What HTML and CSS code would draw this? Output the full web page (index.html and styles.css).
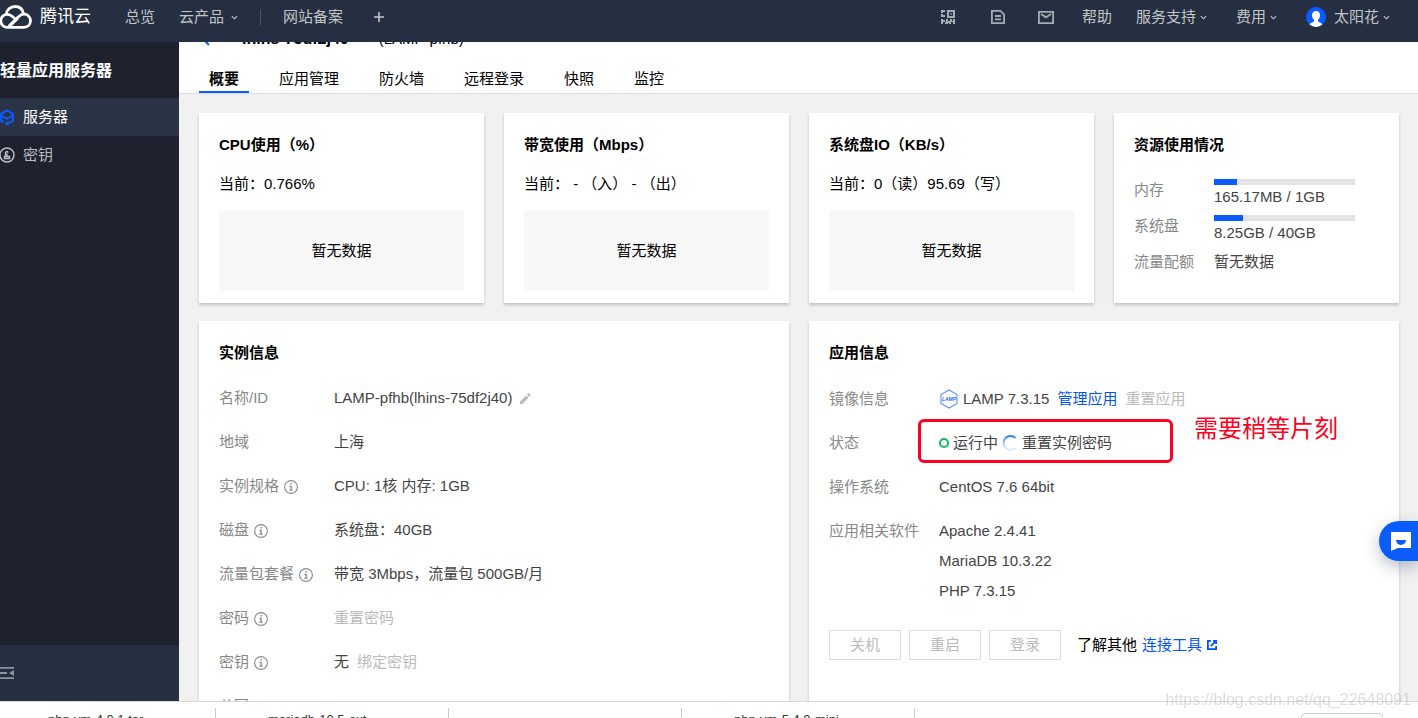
FILE: index.html
```html
<!DOCTYPE html>
<html lang="zh-CN">
<head>
<meta charset="utf-8">
<title>轻量应用服务器</title>
<link rel="stylesheet" href="styles.css">
</head>
<body>
<svg class="sprite" aria-hidden="true">
  <symbol id="chev" viewBox="0 0 8 8"><path d="M1 2.5 4 5.5 7 2.5" fill="none" stroke="currentColor" stroke-width="1.3"/></symbol>
  <symbol id="info" viewBox="0 0 14 14"><circle cx="7" cy="7" r="6.4" fill="none" stroke="currentColor" stroke-width="1.1"/><path d="M6.3 3h1.5v1.5H6.3zM5.2 5.8h2.6v4h1v1H5.2v-1h1.2v-3H5.2z" fill="currentColor"/></symbol>
</svg>

<header class="topbar">
  <a class="brand" href="#">
    <svg class="logo" viewBox="0 0 32 24" fill="none" stroke="#fff" stroke-width="2.8"><path d="M6.5 9.2C6.4 4.9 10.300 1.500 15 1.500c4.300 0 7.600 2.600 8.400 6.700"/><path d="M17.800 13.200 8.400 22.300H6.800C3.200 22.300.8 19.400.8 15.800.8 12.200 3.600 9.400 7.200 9.400c2.300 0 4 .9 5.800 2.600l2 1.800"/><path d="M9.200 22.300h15c3.700 0 6.300-2.900 6.300-6.500 0-3.700-2.800-6.600-6.500-6.600-2.200 0-3.900.9-5.700 2.700l-9.100 8.900"/></svg>
    <span>腾讯云</span>
  </a>
  <nav class="nav-left">
    <a href="#">总览</a>
    <a href="#" class="products">云产品<svg class="chev"><use href="#chev"/></svg></a>
    <span class="divider"></span>
    <a href="#">网站备案</a>
    <button class="plus" aria-label="添加"><svg viewBox="0 0 10 10"><path d="M5 0v10M0 5h10" stroke="currentColor" stroke-width="1.6"/></svg></button>
  </nav>
  <nav class="nav-right">
    <button class="tool" aria-label="二维码"><svg viewBox="0 0 14 14" fill="currentColor"><path d="M0 0h4v2H2v1H0zM0 4h2v1h2v2H0zM6 0h8v8H6zM8 2v4h4V2zM9.300 3.300h1.400v1.400H9.300zM0 9h2v1h2v2H2v2H0zM5 9h2v2h2V9h2v2h1V9h2v5h-2v-2h-2v2H8v-1H7v1H4v-2h1z" fill-rule="evenodd"/></svg></button>
    <button class="tool" aria-label="文档"><svg viewBox="0 0 14 14" fill="none" stroke="currentColor" stroke-width="1.800"><path d="M.9.9h8.600l3.600 3.600v8.600H.9zM4 6h6M4 9.300h6"/></svg></button>
    <button class="tool mail" aria-label="消息"><svg viewBox="0 0 16 13" fill="none" stroke="currentColor" stroke-width="1.800"><path d="M.9.9h14.200v11.200H.9zM3 3l5 3.300L13 3"/></svg></button>
    <a href="#" class="help">帮助</a>
    <a href="#">服务支持<svg class="chev"><use href="#chev"/></svg></a>
    <a href="#">费用<svg class="chev"><use href="#chev"/></svg></a>
    <a href="#" class="user"><svg class="avatar" viewBox="0 0 20 20"><circle cx="10" cy="10" r="10" fill="#0a5cff"/><path d="M10 4c2.500 0 4 1.700 4 4.200 0 1.900-.9 3.700-2 4.600v1.500c0 .8 3.400 1.300 4.400 3.300A10 10 0 0 1 10 20a10 10 0 0 1-6.400-2.400c1-2 4.400-2.500 4.400-3.300v-1.500c-1.100-.9-2-2.700-2-4.600C6 5.700 7.500 4 10 4z" fill="#fff"/></svg>太阳花<svg class="chev"><use href="#chev"/></svg></a>
  </nav>
</header>

<div class="body">
  <aside class="sidebar">
    <h2>轻量应用服务器</h2>
    <nav class="menu">
      <a href="#" class="active"><svg viewBox="0 0 15 16" fill="none" stroke="#0a5cff" stroke-width="2"><path d="M3.500 13.200 1 11.800V4.800L7 1.300l6 3.500v7l-6 3M1.500 7 7 9.800 12.500 6.500"/><circle cx="7" cy="14.500" r=".8" fill="#0a5cff"/></svg>服务器</a>
      <a href="#"><svg viewBox="0 0 15 16" fill="none" stroke="currentColor" stroke-width="1.500"><circle cx="7" cy="8" r="7"/><path d="M4.500 9.500h5v2h-5zM5.500 9V5.500L7 4.500l1.300 1"/><path d="M7 6.500v3"/></svg>密钥</a>
    </nav>
    <button class="collapse" aria-label="收起"><svg viewBox="0 0 14 12" fill="currentColor"><path d="M0 0h14v1.800H0zM0 5h7v2H0zM0 10.200h14V12H0zM14 3v6L9 6z"/></svg></button>
  </aside>

  <main class="content">
    <div class="page-head">
      <div class="title-row">
        <a href="#" class="back" aria-label="返回"><svg viewBox="0 0 10 14"><path d="M8 1 2 7l6 6" fill="none" stroke="#0a5cff" stroke-width="2"/></svg></a>
        <h1>lhins-75df2j40</h1><span>(LAMP-pfhb)</span>
      </div>
      <nav class="tabs">
        <a href="#" class="active">概要</a><a href="#">应用管理</a><a href="#">防火墙</a><a href="#">远程登录</a><a href="#">快照</a><a href="#">监控</a>
      </nav>
    </div>

    <div class="panels">
      <section class="metrics">
        <article class="card"><h3>CPU使用（%）</h3><p>当前：0.766%</p><div class="empty">暂无数据</div></article>
        <article class="card"><h3>带宽使用（Mbps）</h3><p>当前： - （入） - （出）</p><div class="empty">暂无数据</div></article>
        <article class="card"><h3>系统盘IO（KB/s）</h3><p>当前：0（读）95.69（写）</p><div class="empty">暂无数据</div></article>
        <article class="card">
          <h3>资源使用情况</h3>
          <dl class="usage">
            <dt>内存</dt><dd><div class="bar"><div class="fill" style="width:16.500%"></div></div><span>165.17MB / 1GB</span></dd>
            <dt>系统盘</dt><dd><div class="bar"><div class="fill" style="width:20.600%"></div></div><span>8.25GB / 40GB</span></dd>
            <dt>流量配额</dt><dd>暂无数据</dd>
          </dl>
        </article>
      </section>

      <section class="details">
        <article class="card">
          <h3>实例信息</h3>
          <dl class="info">
            <dt>名称/ID</dt><dd>LAMP-pfhb(lhins-75df2j40)<button class="edit" aria-label="编辑"><svg viewBox="0 0 12 12" fill="#bbb"><path d="M0 12V9.300l6.700-6.700 2.700 2.700L2.700 12zM7.600 1.700 9.300 0 12 2.700l-1.700 1.700z"/></svg></button></dd>
            <dt>地域</dt><dd>上海</dd>
            <dt>实例规格<svg class="tip"><use href="#info"/></svg></dt><dd>CPU: 1核 内存: 1GB</dd>
            <dt>磁盘<svg class="tip"><use href="#info"/></svg></dt><dd>系统盘：40GB</dd>
            <dt>流量包套餐<svg class="tip"><use href="#info"/></svg></dt><dd>带宽 3Mbps，流量包 500GB/月</dd>
            <dt>密码<svg class="tip"><use href="#info"/></svg></dt><dd><button class="link off" disabled>重置密码</button></dd>
            <dt>密钥<svg class="tip"><use href="#info"/></svg></dt><dd>无<button class="link off after" disabled>绑定密钥</button></dd>
            <dt>公网IP</dt><dd></dd>
          </dl>
        </article>

        <article class="card">
          <h3>应用信息</h3>
          <dl class="info app">
            <dt>镜像信息</dt>
            <dd><svg class="lamp" viewBox="0 0 20 20"><path d="M10 1l8 4.500v9L10 19l-8-4.500v-9z" fill="#fff" stroke="#5b93f5" stroke-width="1.100"/><text x="10" y="12" text-anchor="middle">LAMP</text></svg>LAMP 7.3.15<a href="#" class="after">管理应用</a><button class="link off after" disabled>重置应用</button></dd>
            <dt>状态</dt>
            <dd class="status"><span class="dot"></span>运行中<svg class="spinner" viewBox="0 0 16 16" fill="none" stroke-width="2"><defs><linearGradient id="sp" x1="0" y1="0" x2="0" y2="1"><stop offset="0" stop-color="#2f7df6"/><stop offset=".5" stop-color="#a9cbfb"/><stop offset="1" stop-color="#e4efff"/></linearGradient></defs><path d="M13.500 3A7 7 0 1 0 13.500 13" stroke="url(#sp)"/></svg>重置实例密码
              <span class="mark-box"></span><span class="mark-text">需要稍等片刻</span></dd>
            <dt>操作系统</dt><dd>CentOS 7.6 64bit</dd>
            <dt>应用相关软件</dt>
            <dd class="stack"><span>Apache 2.4.41</span><span>MariaDB 10.3.22</span><span>PHP 7.3.15</span></dd>
          </dl>
          <div class="actions">
            <button disabled>关机</button><button disabled>重启</button><button disabled>登录</button>
            <p>了解其他 <a href="#">连接工具<svg class="ext" viewBox="0 0 10 10" fill="none" stroke="currentColor" stroke-width="1.800"><path d="M4 .9H.9v8.200h8.200V6M3.800 6.200 8.800 1.200"/><path d="M6 .9h3.100V4"/></svg></a></p>
          </div>
        </article>
      </section>
    </div>
  </main>
</div>

<footer class="downloads">
  <div class="file">php-vm-4.0.1.tar</div>
  <div class="file">mariadb-10.5-ext</div>
  <div class="file"></div>
  <div class="file">php-vm-5.4.0-mini</div>
  <button class="show-all" aria-label="全部显示"></button>
</footer>

<button class="chat" aria-label="在线客服"><svg viewBox="0 0 20 19"><path d="M0 0h20v16H7l-7 3z" fill="#fff"/><path d="M5 8h10a5 5 0 0 1-10 0z" fill="#0a5cff"/></svg></button>
<span class="watermark">https://blog.csdn.net/qq_22648091</span>
</body>
</html>
```

FILE: styles.css
```css
* { box-sizing: border-box; }
body, h1, h2, h3, p, dl, dd { margin: 0; }
body {
  height: 100vh;
  overflow: hidden;
  display: flex;
  flex-direction: column;
  font: 15px/22px "Liberation Sans", "Noto Sans CJK SC", sans-serif;
  color: #000;
  background: #fff;
}
a { color: #0052ff; text-decoration: none; }
button { font: inherit; color: inherit; background: none; border: 0; padding: 0; }
svg { display: block; flex: none; }
.sprite { position: absolute; width: 0; height: 0; }

.topbar {
  height: 42px;
  padding: 0 28px 8px 0;
  display: flex;
  align-items: center;
  flex: none;
  background: #262e41;
  color: #c1c6c8;
}
.topbar a { display: flex; align-items: center; color: inherit; }
.topbar .brand { gap: 8px; font-size: 17px; color: #fff; }
.logo { width: 32px; height: 24px; }
.chev { width: 7px; height: 7px; margin-left: 4px; }
.nav-left { display: flex; align-items: center; gap: 24px; margin-left: 34px; }
.products .chev { margin-left: 7px; }
.divider { width: 1px; height: 16px; margin: 0 -2px; background: #4b5366; }
.plus { margin-left: 7px; }
.plus svg { width: 10px; height: 10px; }
.nav-right { display: flex; align-items: center; gap: 29px; margin-left: auto; }
.tool { margin-right: 7px; color: #a3adb3; }
.tool svg { width: 14px; height: 14px; }
.tool.mail { margin: 0 -1px 0 -3px; }
.tool.mail svg { width: 16px; height: 13px; }
.help { margin-right: -5px; }
.avatar { width: 20px; height: 20px; margin-right: 8px; }

.body { flex: 1; min-height: 0; display: flex; }
.sidebar {
  width: 179px;
  flex: none;
  display: flex;
  flex-direction: column;
  background: #1e222e;
  color: #b9bcc1;
}
.sidebar h2 { padding: 18px 0 16px; font-size: 16px; line-height: 22px; color: #fff; }
.menu { display: flex; flex-direction: column; }
.menu a { display: flex; align-items: center; gap: 8px; height: 38px; color: inherit; }
.menu svg { width: 15px; height: 16px; }
.menu .active { background: #2b3447; color: #fff; }
.collapse { margin-top: auto; height: 56px; background: #262e41; color: #8b959d; }
.collapse svg { width: 14px; height: 12px; }

.content { flex: 1; min-width: 0; overflow: hidden; background: #f1f1f1; }
.page-head { background: #fff; border-bottom: 1px solid #ddd; padding: 0 20px; }
.title-row { display: flex; align-items: center; height: 30px; margin-top: -18px; }
.back { padding-left: 2px; width: 43px; }
.back svg { width: 10px; height: 14px; }
h1 { font-size: 16px; line-height: 22px; margin-right: 30px; }
.tabs { display: flex; gap: 20px; margin-top: 7px; }
.tabs a { padding: 7px 10px 1px; color: #000; border-bottom: 2px solid transparent; }
.tabs .active { font-weight: bold; border-color: #0a5cff; }

.panels { display: grid; gap: 18px; padding: 19px 19px 0 20px; }
.metrics { display: grid; grid-template-columns: repeat(4, 1fr); gap: 20px; }
.details { display: grid; grid-template-columns: repeat(2, 1fr); gap: 20px; }
.card { background: #fff; padding: 21px 20px 12px; box-shadow: 0 2px 3px rgba(0, 0, 0, .2); }
h3 { font-size: 15px; line-height: 22px; }
.metrics p { margin: 17px 0 16px; }
.empty { height: 80px; display: grid; place-items: center; background: #f7f7f7; }

.usage { display: grid; grid-template-columns: 80px 1fr; row-gap: 6px; margin: 23px 24px 0 0; }
dt { color: #888; }
dd { color: #444; }
.usage span { display: block; line-height: 24px; }
.bar { height: 6px; background: #e3e3e3; }
.fill { height: 100%; background: #0a5cff; }

.info { display: grid; grid-template-columns: 115px 1fr; row-gap: 22px; margin-top: 23px; }
.app { grid-template-columns: 110px 1fr; margin-top: 24px; }
.info dt, .info dd { display: flex; align-items: center; min-height: 22px; }
.info dt { align-self: start; }
.tip { width: 14px; height: 14px; margin: 1px 0 0 5px; }
.edit { margin-left: 8px; }
.edit svg { width: 11px; height: 11px; }
.off { color: #bbb; }
.after { margin-left: 8px; }
.lamp { width: 20px; height: 20px; margin-right: 4px; }
.lamp text { font: italic bold 5px "Liberation Sans", sans-serif; fill: #2b6de8; }
.status { position: relative; }
.dot { width: 10px; height: 10px; margin-right: 4px; border: 2px solid #0abf5b; border-radius: 50%; }
.spinner { width: 16px; height: 16px; margin: 0 4px; }
.mark-box {
  position: absolute;
  left: -21px;
  top: -13px;
  width: 255px;
  height: 44px;
  border: 3px solid #ff0020;
  border-radius: 6px;
}
.mark-text {
  position: absolute;
  left: 255px;
  top: -18px;
  font-size: 24px;
  line-height: 30px;
  white-space: nowrap;
  color: #ff0020;
}
.info .stack { flex-direction: column; align-items: flex-start; gap: 8px; }
.actions { display: flex; align-items: center; gap: 8px; margin-top: 28px; }
.actions button { width: 72px; height: 30px; border: 1px solid #ddd; color: #bbb; }
.actions p { display: flex; gap: 5px; margin-left: 8px; }
.actions a { display: flex; align-items: center; gap: 5px; }
.ext { width: 10px; height: 10px; }

.downloads {
  height: 17px;
  flex: none;
  display: flex;
  overflow: hidden;
  padding-top: 6px;
  border-top: 1px solid #d8d8d8;
  font-size: 13px;
  line-height: 24px;
  color: #333;
}
.file { width: 233px; flex: none; height: 24px; padding-left: 52px; border-right: 1px solid #ccc; }
.file:first-child { width: 216px; padding-left: 48px; }
.show-all {
  width: 82px;
  height: 22px;
  margin: 5px 35px 0 auto;
  border: 1px solid #ccc;
  border-radius: 4px;
}

.chat {
  position: fixed;
  right: 0;
  top: 521px;
  width: 39px;
  height: 40px;
  padding: 1px 0 0 12px;
  border-radius: 20px 0 0 20px;
  background: #0a5cff;
  box-shadow: 0 6px 16px rgba(30, 50, 100, .3);
}
.chat svg { width: 20px; height: 19px; }
.watermark {
  position: fixed;
  right: 7px;
  bottom: 7px;
  font-size: 16px;
  color: rgba(170, 170, 170, .4);
}
```
